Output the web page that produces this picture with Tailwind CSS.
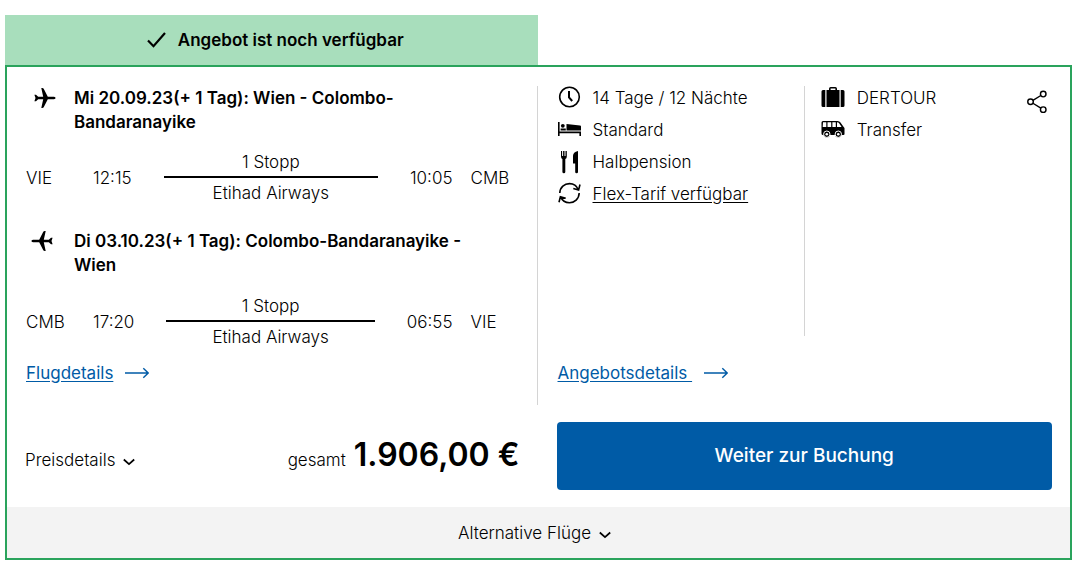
<!DOCTYPE html>
<html lang="de">
<head>
<meta charset="utf-8">
<meta name="viewport" content="width=device-width, initial-scale=1">
<title>Angebot</title>
<script src="https://cdn.jsdelivr.net/npm/@tailwindcss/browser@4"></script>
</head>
<body class="bg-white pt-[15px] pr-[10px] pb-[7px] pl-[5px] font-['Inter','Liberation_Sans',sans-serif] text-[17px] leading-6 font-light text-black">
<svg class="hidden">
  <symbol id="plane" viewBox="0 0 22 20"><path d="M21.6 10c0-1-1.300-1.300-2.800-1.300h-5L9.700.7C9.400.2 8.900 0 8.200 0h-.9l1.900 8.700H4.200L2 6.800H.4L1.500 10 .4 13.200H2l2.200-1.900h5L7.300 20h.9c.7 0 1.200-.2 1.500-.7l4.100-8h5c1.500 0 2.800-.3 2.800-1.300z"/></symbol>
  <symbol id="arrow" viewBox="0 0 24 12"><path d="M0 6h23M18.300 1.200 23.200 6l-4.900 4.800" fill="none" stroke="currentColor" stroke-width="1.400"/></symbol>
  <symbol id="chevron" viewBox="0 0 12 8"><path d="m.8 1.500 5.200 4.700 5.200-4.700" fill="none" stroke="currentColor" stroke-width="1.700"/></symbol>
</svg>
<main>
  <div class="flex h-[50px] w-[calc(50%-1px)] items-center justify-center gap-3 bg-[#a8debc] pl-2 font-semibold">
    <svg class="h-4 w-[19px]" viewBox="0 0 19 16"><path d="m1 8.500 5.500 5.700L18 1" fill="none" stroke="currentColor" stroke-width="2.200"/></svg>
    <p>Angebot ist noch verfügbar</p>
  </div>
  <article class="border-2 border-[#2aa35c]">
    <div class="grid grid-cols-[calc(50%-1px)_1fr] pt-[19px]">
      <section class="border-r border-[#d4d4d4] pb-5 pl-[19px] pr-[18px]">
        <div class="flex">
          <div class="w-12 shrink-0 pl-2 pt-0.5"><svg class="h-5 w-[22px]"><use href="#plane"/></svg></div>
          <h2 class="pr-10 font-semibold">Mi 20.09.23(+ 1 Tag): Wien - Colombo-Bandaranayike</h2>
        </div>
        <div class="mt-4 flex items-center">
          <span class="w-[67px]">VIE</span>
          <time>12:15</time>
          <div class="mx-8 flex-1 text-center"><p>1 Stopp</p><hr class="mt-0.5 mb-[3px] border-t-2 border-black"><p>Etihad Airways</p></div>
          <time>10:05</time>
          <span class="ml-[18px] w-12">CMB</span>
        </div>
        <div class="mt-6 flex">
          <div class="w-12 shrink-0 pl-[5px] pt-0.5"><svg class="h-5 w-[22px] -scale-x-100"><use href="#plane"/></svg></div>
          <h2 class="pr-8 font-semibold">Di 03.10.23(+ 1 Tag): Colombo-Bandaranayike - Wien</h2>
        </div>
        <div class="mt-[17px] flex items-center">
          <span class="w-[67px]">CMB</span>
          <time>17:20</time>
          <div class="mx-8 flex-1 text-center"><p>1 Stopp</p><hr class="mt-0.5 mb-[3px] border-t-2 border-black"><p>Etihad Airways</p></div>
          <time>06:55</time>
          <span class="ml-[18px] w-12">VIE</span>
        </div>
        <a href="#" class="mt-3 flex w-fit items-center gap-3 font-normal text-[#005ba6]"><span class="underline underline-offset-2">Flugdetails</span><svg class="h-3 w-6"><use href="#arrow"/></svg></a>
      </section>
      <section class="flex flex-col pr-[18px] pb-5 pl-5">
        <div class="flex flex-1 leading-8">
          <ul class="-mt-1 w-1/2 shrink-0">
            <li class="flex items-center gap-3"><svg class="h-6 w-[23px]" viewBox="0 0 23 24" fill="none" stroke="currentColor" stroke-width="1.600"><circle cx="11.500" cy="11" r="9.800"/><path d="M11 5v6.300l3.200 3.700" stroke-width="2"/></svg>14 Tage / 12 Nächte</li>
            <li class="flex items-center gap-3"><svg class="h-6 w-[23px]" viewBox="0 0 23 24"><path d="M0 4h1.600v9.400H23V18h-1.600v-2.700H1.600V18H0zM8.500 6 22 7.400q1 .2 1 1v4H8.500zM2.600 10.600h5.200v1.800H2.600z"/><circle cx="4.800" cy="7.800" r="1.900"/></svg>Standard</li>
            <li class="flex items-center gap-3"><svg class="h-6 w-[23px]" viewBox="0 0 23 24"><path d="M3 1h1.100v5h1V1h1.400v5h1V1h1.300v5.500q0 2-1.500 2.600V22q0 1.200-1.400 1.200T4.400 22V9.100Q3 8.500 3 6.500zM20 1v21q0 1.200-1.400 1.200T17.200 22v-8.500H15V6q0-4 5-5z"/></svg>Halbpension</li>
            <li class="flex items-center gap-3"><svg class="h-6 w-[23px]" viewBox="0 0 23 24" fill="none" stroke="currentColor" stroke-width="1.600"><path d="M1.800 11C2 5 6.500 1.600 11.500 1.600c4.200 0 7.300 2.400 8.700 6M21.200 11c-.2 6-4.700 9.800-9.700 9.800-4.200 0-7.400-2.400-8.800-5.900M22 2.500 20.600 8l-5.300-1.400M1 20.300l1.400-5.600 5.300 1.500"/></svg><a href="#" class="underline underline-offset-2">Flex-Tarif verfügbar</a></li>
          </ul>
          <div class="-ml-px flex h-[250px] flex-1 justify-between border-l border-[#d4d4d4] pl-4">
            <ul class="-mt-1">
              <li class="flex items-center gap-3"><svg class="h-6 w-6" viewBox="0 0 24 24"><path d="M8 4V2.700Q8 1 9.700 1h4.600Q16 1 16 2.700V4h2.500v17h-13V4zm1.600 0h4.800V2.500H9.600zM4.300 4v17H2q-1.500 0-1.500-1.500v-14Q.5 4 2 4zM19.700 4H22q1.500 0 1.500 1.500v14q0 1.500-1.500 1.500h-2.300z"/></svg>DERTOUR</li>
              <li class="flex items-center gap-3"><svg class="h-6 w-6" viewBox="0 0 24 24"><path d="M2 3h14.500q2 0 3 1.500l3 4.300 1 1.200v6q0 1-1 1H2q-1.500 0-1.500-1.500V4.500Q.5 3 2 3z"/><path d="M2 4.300h3.300v4.800H1.700zM6.500 4.300h3.700v4.800H6.500zM11.400 4.300h3.400v4.800h-3.400zM16 4.300q1.500 0 2.300 1.200l2.300 3.600H16z" fill="white"/><g fill="black" stroke="white" stroke-width="1"><circle cx="5.800" cy="16.200" r="3.200"/><circle cx="17.300" cy="16.200" r="3.200"/></g><circle cx="5.800" cy="16.200" r="1.300" fill="white"/><circle cx="17.300" cy="16.200" r="1.300" fill="white"/></svg>Transfer</li>
            </ul>
            <button type="button" aria-label="Teilen" class="mt-1 mr-1 h-6 w-[21px]"><svg class="h-6 w-[21px]" viewBox="0 0 22 24" fill="none" stroke="currentColor" stroke-width="1.500"><circle cx="3.700" cy="11.800" r="2.900"/><circle cx="17" cy="3.700" r="2.900"/><circle cx="17" cy="20" r="2.900"/><path d="m6.200 10.300 8.300-5.100M6.200 13.300l8.300 5.200"/></svg></button>
          </div>
        </div>
        <a href="#" class="flex w-fit items-center gap-3 font-normal text-[#005ba6]"><span class="whitespace-pre underline underline-offset-2">Angebotsdetails </span><svg class="h-3 w-6"><use href="#arrow"/></svg></a>
      </section>
    </div>
    <div class="grid grid-cols-[calc(50%-1px)_1fr] pt-[17px] pb-[17px]">
      <div class="flex items-baseline justify-between pt-[11px] pr-[18px] pl-[18px]">
        <button type="button" class="flex items-center gap-2">Preisdetails <svg class="mt-1 h-2 w-3"><use href="#chevron"/></svg></button>
        <p class="flex items-baseline gap-2"><span>gesamt</span><strong class="text-[32px] leading-[44px] font-semibold">1.906,00 €</strong></p>
      </div>
      <div class="pr-[18px] pl-[19px]">
        <button type="button" class="h-[68px] w-full rounded bg-[#005ba6] text-[19px] font-medium text-white">Weiter zur Buchung</button>
      </div>
    </div>
    <button type="button" class="flex h-[51px] w-full items-center justify-center gap-2 bg-[#f3f3f3] pr-2">Alternative Flüge <svg class="mt-1 h-2 w-3"><use href="#chevron"/></svg></button>
  </article>
</main>
</body>
</html>
